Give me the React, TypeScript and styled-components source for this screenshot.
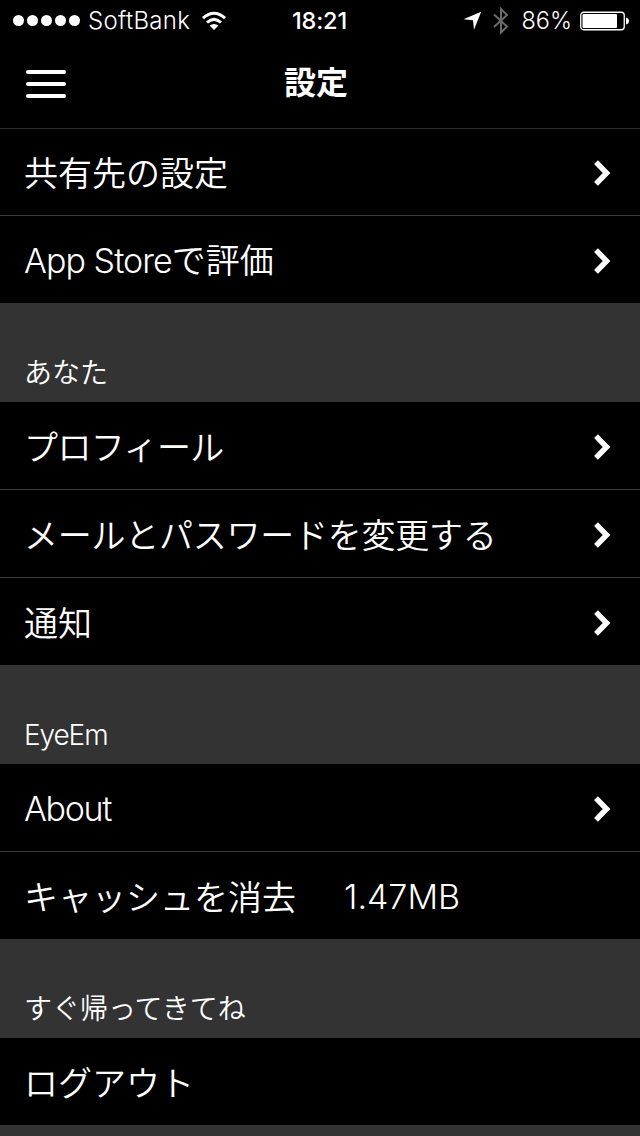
import React from "react";
import styled, { createGlobalStyle } from "styled-components";

const GlobalStyle = createGlobalStyle`
  * { box-sizing: border-box; }
  body { margin: 0; background: #000; overflow: hidden; }
`;

const Screen = styled.div`
  width: 640px;
  height: 1136px;
  overflow: hidden;
  display: flex;
  flex-direction: column;
  background: #000;
  color: #fff;
  font-family: "Noto Sans CJK JP", sans-serif;
  font-weight: 350;
  white-space: nowrap;
`;

const StatusBar = styled.header`
  height: 40px;
  flex: none;
  display: grid;
  grid-template-columns: 1fr auto 1fr;
  align-items: center;
  padding: 0 11px 0 13px;
`;

const StatusGroup = styled.div<{ $end?: boolean }>`
  display: flex;
  align-items: center;
  justify-content: ${(p) => (p.$end ? "flex-end" : "flex-start")};
`;

const SignalDots = styled.div`
  display: flex;
  gap: 3px;
  margin-right: 8px;
`;

const Dot = styled.i`
  width: 11px;
  height: 11px;
  border-radius: 50%;
  background: #fff;
`;

const Carrier = styled.span`
  width: 101px;
  margin-right: 12px;
  font: 300 24px/40px Inter, sans-serif;
  letter-spacing: 0.3px;
  padding-top: 1px;
`;

const Clock = styled.time`
  font: 500 23.5px/40px Inter, sans-serif;
  letter-spacing: -0.2px;
  padding: 1px 3px 0 0;
`;

const Percent = styled.span`
  margin: 0 8px 0 12px;
  padding-top: 1px;
  font: 300 23.5px/40px Inter, sans-serif;
`;

const NavBar = styled.nav`
  height: 88px;
  flex: none;
  display: grid;
  grid-template-columns: 1fr auto 1fr;
  align-items: center;
  padding: 0 30px 0 26px;
`;

const MenuButton = styled.button`
  width: 40px;
  height: 28px;
  padding: 0;
  border: 0;
  background: none;
  display: flex;
  flex-direction: column;
  justify-content: space-between;
  align-items: stretch;
`;

const MenuBar = styled.i`
  height: 4px;
  border-radius: 2px;
  background: #fff;
`;

const Title = styled.h1`
  margin: 0 4px 8px 0;
  font-size: 32px;
  line-height: 48px;
  font-weight: 700;
`;

const List = styled.ul<{ $ruled?: boolean }>`
  list-style: none;
  margin: 0;
  padding: 0;
  flex: none;
  border-top: ${(p) => (p.$ruled ? "1px solid #2b2b2d" : "0")};
`;

const Row = styled.li<{ $height?: number }>`
  height: ${(p) => p.$height ?? 88}px;
  display: flex;
  align-items: center;
  padding: 0 29px 0 24px;
  font-size: 34px;
  line-height: 50px;

  &:not(:last-child) {
    border-bottom: 1px solid #3a3a3a;
  }
`;

const Label = styled.span<{ $spacing?: number }>`
  flex: none;
  letter-spacing: ${(p) => p.$spacing ?? 0}px;
`;

const Value = styled.span`
  margin-left: 48px;
`;

const Latin = styled.span<{ $spacing: number }>`
  font-family: Inter, sans-serif;
  font-weight: 300;
  letter-spacing: ${(p) => p.$spacing}px;
`;

const SectionHeader = styled.h2`
  height: 99px;
  flex: none;
  margin: 0;
  padding: 48px 24px 0;
  background: #333;
  font-size: 28px;
  line-height: 40px;
  font-weight: 350;
`;

const Footer = styled.footer`
  flex: 1;
  background: #333;
`;

const ChevronIcon = styled.svg`
  margin: 2px 0 0 auto;
  flex: none;
`;

const Chevron = () => (
  <ChevronIcon width="17" height="26" viewBox="0 0 17 26">
    <path d="M2 2.2 L12.6 13 L2 23.8" fill="none" stroke="#fff" strokeWidth="5.4" />
  </ChevronIcon>
);

const WifiIcon = () => (
  <svg width="26" height="20" viewBox="0 0 26 20">
    <g fill="none" stroke="#fff" strokeWidth="3">
      <path d="M2 7.2 Q13 -2.8 24 7.2" />
      <path d="M6 11.5 Q13 5.3 20 11.5" />
    </g>
    <path d="M8.6 14.6 Q13 11.2 17.4 14.6 L13 19 Z" fill="#fff" />
  </svg>
);

const LocationIcon = () => (
  <svg width="19" height="19" viewBox="0 0 19 19">
    <path d="M18.2 .8 L11 18.8 L10 9.3 L.5 8.2 Z" fill="#fff" />
  </svg>
);

const BluetoothIcon = styled.svg`
  margin-left: 11px;
`;

const BatteryIcon = () => (
  <svg width="49" height="20" viewBox="0 0 49 20">
    <rect x=".75" y="1.25" width="43.5" height="17.5" rx="3" fill="none" stroke="#fff" strokeWidth="1.3" />
    <rect x="2.5" y="3" width="34.5" height="14" rx="1" fill="#fff" />
    <path d="M46 6.5 Q49 7.5 49 10 Q49 12.5 46 13.5 Z" fill="#fff" />
  </svg>
);

export default function App() {
  return (
    <>
      <GlobalStyle />
      <Screen>
        <StatusBar>
          <StatusGroup>
            <SignalDots>
              {[0, 1, 2, 3, 4].map((n) => (
                <Dot key={n} />
              ))}
            </SignalDots>
            <Carrier>SoftBank</Carrier>
            <WifiIcon />
          </StatusGroup>
          <Clock>18:21</Clock>
          <StatusGroup $end>
            <LocationIcon />
            <BluetoothIcon width="16" height="28" viewBox="0 0 16 28">
              <path
                d="M1 7.5 L14 19.5 L8 25.5 V2 L14 8 L1 20"
                fill="none"
                stroke="#6b6b6b"
                strokeWidth="2"
              />
            </BluetoothIcon>
            <Percent>86%</Percent>
            <BatteryIcon />
          </StatusGroup>
        </StatusBar>
        <NavBar>
          <MenuButton aria-label="メニュー">
            <MenuBar />
            <MenuBar />
            <MenuBar />
          </MenuButton>
          <Title>設定</Title>
        </NavBar>

        <List $ruled>
          <Row $height={87}>
            <Label>共有先の設定</Label>
            <Chevron />
          </Row>
          <Row $height={87}>
            <Label>
              <Latin $spacing={-0.95}>App Store</Latin>で評価
            </Label>
            <Chevron />
          </Row>
        </List>

        <SectionHeader>あなた</SectionHeader>
        <List>
          <Row>
            <Label $spacing={-0.6}>プロフィール</Label>
            <Chevron />
          </Row>
          <Row>
            <Label $spacing={-0.25}>メールとパスワードを変更する</Label>
            <Chevron />
          </Row>
          <Row $height={87}>
            <Label>通知</Label>
            <Chevron />
          </Row>
        </List>

        <SectionHeader>
          <Latin $spacing={-1.1}>EyeEm</Latin>
        </SectionHeader>
        <List>
          <Row>
            <Label>
              <Latin $spacing={-1.3}>About</Latin>
            </Label>
            <Chevron />
          </Row>
          <Row $height={87}>
            <Label>キャッシュを消去</Label>
            <Value>
              <Latin $spacing={0}>1.47MB</Latin>
            </Value>
          </Row>
        </List>

        <SectionHeader>すぐ帰ってきてね</SectionHeader>
        <List>
          <Row $height={87}>
            <Label>ログアウト</Label>
          </Row>
        </List>
        <Footer />
      </Screen>
    </>
  );
}
